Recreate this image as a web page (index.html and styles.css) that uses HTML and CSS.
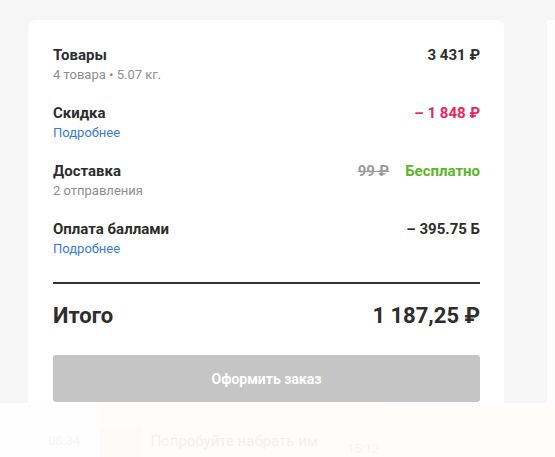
FILE: index.html
```html
<!DOCTYPE html>
<html lang="ru">
<head>
    <meta charset="UTF-8">
    <meta name="viewport" content="width=device-width, initial-scale=1.0">
    <title>Корзина</title>
    <link rel="stylesheet" href="styles.css">
</head>
<body>
    <div class="page">
        <div class="summary">
            <div class="rows">
                <div class="row">
                    <div class="label">
                        <div class="title">Товары</div>
                        <div class="sub">4 товара • 5.07 кг.</div>
                    </div>
                    <div class="value">3 431 ₽</div>
                </div>
                <div class="row">
                    <div class="label">
                        <div class="title">Скидка</div>
                        <a class="more" href="#">Подробнее</a>
                    </div>
                    <div class="value discount">– 1 848 ₽</div>
                </div>
                <div class="row">
                    <div class="label">
                        <div class="title">Доставка</div>
                        <div class="sub">2 отправления</div>
                    </div>
                    <div class="value"><s class="old">99 ₽</s><span class="free">Бесплатно</span></div>
                </div>
                <div class="row">
                    <div class="label">
                        <div class="title">Оплата баллами</div>
                        <a class="more" href="#">Подробнее</a>
                    </div>
                    <div class="value">– 395.75 Б</div>
                </div>
            </div>

            <div class="divider"></div>

            <div class="total">
                <span>Итого</span>
                <span>1 187,25 ₽</span>
            </div>

            <button class="checkout" type="button" disabled>Оформить заказ</button>
        </div>
        <div class="side"></div>
    </div>

    <!-- faded chat widget over the bottom of the page -->
    <div class="chat-fade">
        <span class="time">08:34</span>
        <div class="msg">
            <div class="avatar"></div>
            <span class="msg-text">Попробуйте набрать им</span>
            <span class="time late">15:12</span>
        </div>
        <div class="pic"></div>
    </div>
</body>
</html>
```

FILE: styles.css
```css
body {
    margin: 0;
    background: #f6f6f6;
    font-family: Roboto, "Noto Sans", sans-serif;
    color: #2d2d2d;
    overflow: hidden;
}

.page {
    display: flex;
    align-items: flex-start;
    padding: 20px 0 0 28px;
    height: 457px;
    box-sizing: border-box;
}

.summary {
    width: 476px;
    box-sizing: border-box;
    background: #fff;
    border-radius: 8px;
    padding: 25px 24px 30px 25px;
}

.side {
    margin-left: 43px;
    flex: 1;
    align-self: stretch;
    background: #fdfdfd;
}

.rows {
    display: flex;
    flex-direction: column;
    gap: 19px;
}

.row {
    display: flex;
    justify-content: space-between;
    align-items: flex-start;
}

.title {
    font-size: 15px;
    font-weight: bold;
    line-height: 20px;
}

.sub, .more {
    display: block;
    font-size: 13px;
    line-height: 19px;
    color: #8e8e8e;
}

.more {
    color: #3a7bdb;
    text-decoration: none;
}

.value {
    font-size: 15px;
    font-weight: bold;
    line-height: 20px;
    white-space: nowrap;
}

.discount {
    color: #e8265c;
}

.old {
    color: #9b9b9b;
    margin-right: 16px;
}

.free {
    color: #5ab52a;
}

.divider {
    height: 2px;
    background: #333;
    margin-top: 24px;
}

.total {
    display: flex;
    justify-content: space-between;
    font-size: 22px;
    font-weight: bold;
    line-height: 28px;
    margin-top: 18px;
}

.checkout {
    display: block;
    width: 100%;
    height: 47px;
    margin-top: 25px;
    border: none;
    border-radius: 3px;
    background: #c5c5c5;
    color: #fff;
    font-family: inherit;
    font-size: 14px;
    font-weight: bold;
}

.chat-fade {
    position: absolute;
    left: 0;
    right: 0;
    top: 403px;
    bottom: 0;
    background: #fefefe;
    display: flex;
    align-items: flex-start;
    padding-left: 48px;
    color: #f5f5f5;
    font-size: 14px;
}

.time {
    margin-top: 30px;
    font-size: 13px;
    color: #f6f6f6;
}

.msg {
    display: flex;
    align-items: flex-start;
    width: 285px;
    height: 54px;
    margin-left: 20px;
    margin-top: 2px;
    background: #fefdfb;
}

.avatar {
    width: 42px;
    height: 32px;
    margin-top: 22px;
    background: #fcfbf8;
}

.msg-text {
    margin: 27px 0 0 8px;
    font-size: 15px;
    color: #f1f1f1;
}

.late {
    margin: 36px 0 0 auto;
    padding-right: 6px;
}

.pic {
    flex: 1;
    height: 54px;
    background: #fefdfa;
}
```
